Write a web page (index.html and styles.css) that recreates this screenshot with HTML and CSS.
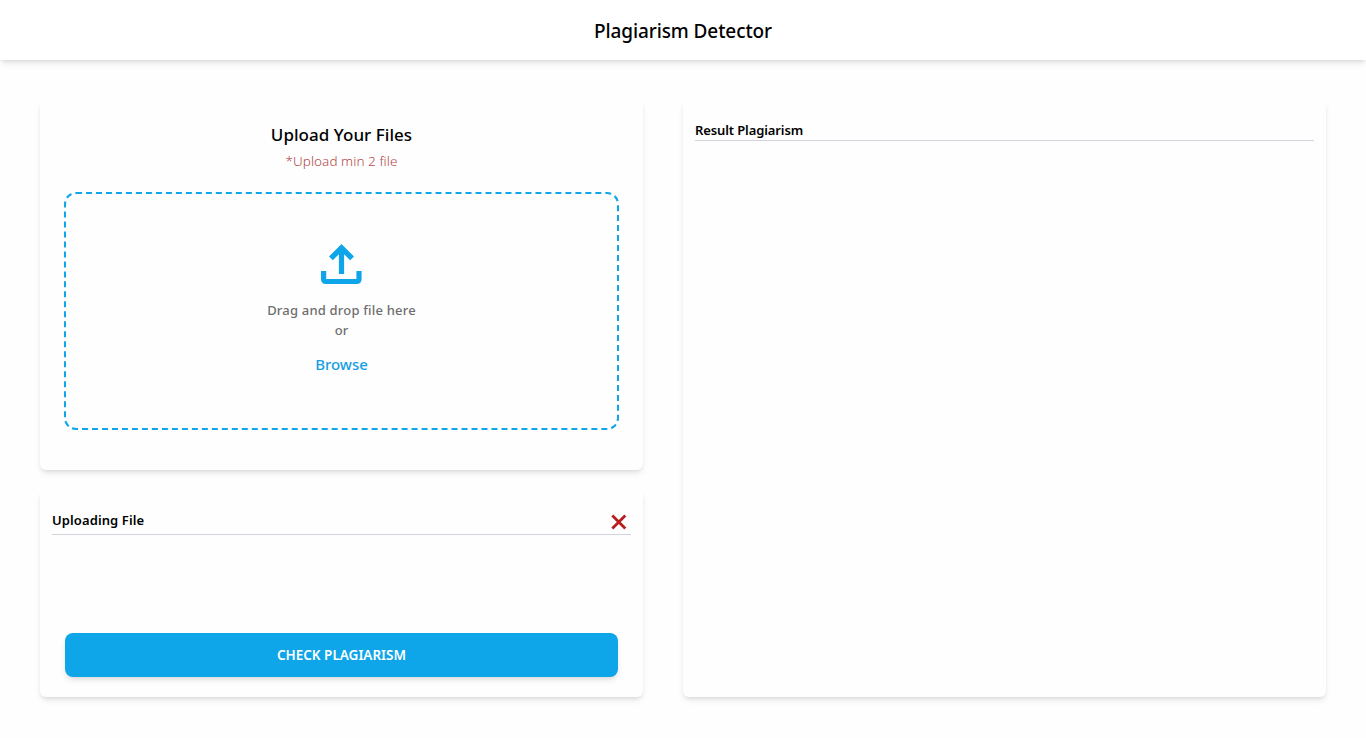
FILE: index.html
```html
<!DOCTYPE html>
<html lang="en">
<head>
<meta charset="utf-8">
<title>Plagiarism Detector</title>
<link rel="stylesheet" href="styles.css">
</head>
<body>
<header class="header"><h1 class="header-title"><span>Plagiarism Detector</span></h1></header>
<main class="layout">
  <div class="left">
    <section class="card upload">
      <h2 class="upload-title"><span>Upload Your Files</span></h2>
      <p class="upload-note"><span>*Upload min 2 file</span></p>
      <div class="dropzone">
        <svg class="upload-icon" viewBox="0 0 41 40" width="41" height="40" fill="#0ea5e9">
          <path d="M20.5 0 33 12.5 29.2 16.3 23.1 10.2V30H17.9V10.2L11.8 16.3 8 12.5Z"/>
          <path d="M0 27H5.2V34.9H35.4V27H40.6V35Q40.6 40 35.6 40H5Q0 40 0 35Z"/>
        </svg>
        <p class="drop-text"><span class="drag">Drag and drop file here</span><br><span>or</span></p>
        <a class="browse">Browse</a>
      </div>
    </section>
    <section class="card files">
      <div class="files-head">
        <h3 class="card-title uploading">Uploading File</h3>
        <svg class="close" viewBox="0 0 16 16" width="16" height="16"><path d="M1.3 1.6 14.3 14.4M14.3 1.6 1.3 14.4" fill="none" stroke="#b91c1c" stroke-width="2.8"/></svg>
      </div>
      <button class="check"><span>CHECK PLAGIARISM</span></button>
    </section>
  </div>
  <section class="card result">
    <div class="result-head"><h3 class="card-title result-title">Result Plagiarism</h3></div>
  </section>
</main>
</body>
</html>
```
FILE: styles.css
```css
* { box-sizing: border-box; margin: 0; padding: 0; }
body {
  height: 738px;
  overflow: hidden;
  background: #fefefe;
  color: #000;
  font-family: "Noto Sans", "Open Sans", sans-serif;
}
.header, .card, .check {
  box-shadow: 0 4px 6px -1px rgba(0, 0, 0, .1), 0 2px 4px -2px rgba(0, 0, 0, .1);
}
.header { height: 60px; background: #fff; text-align: center; }
.header-title { font-size: 19px; font-weight: 500; letter-spacing: -.1px; line-height: 62px; }
.layout { display: flex; gap: 40px; height: 637px; padding: 40px 40px 0; }
.left { display: flex; flex-direction: column; gap: 20px; width: 603px; }
.card { border-radius: 6px; background: #fefefe; }
.upload { height: 370px; padding: 20px 24px 0; text-align: center; }
.upload-title { height: 28px; font-size: 17px; font-weight: 500; letter-spacing: .04px; line-height: 30px; }
.upload-note { height: 20px; margin: 3px 0 21px; color: #b04848; font-size: 13.5px; font-weight: 300; letter-spacing: .05px; line-height: 20px; }
.dropzone {
  display: flex;
  flex-direction: column;
  align-items: center;
  height: 238px;
  padding-top: 50px;
  border: 2px dashed #0ea5e9;
  border-radius: 12px;
}
.upload-icon { display: block; flex: none; }
.drop-text { margin-top: 16px; color: #6e6e6e; font-size: 13px; font-weight: 500; line-height: 20px; }
.drag { letter-spacing: .2px; }
.browse { margin-top: 12px; color: #159fe2; font-size: 15px; font-weight: 500; line-height: 24px; }
.files { height: 207px; padding: 20px 12px 0; }
.files-head {
  display: flex;
  justify-content: space-between;
  height: 25px;
  padding-right: 4px;
  border-bottom: 1px solid #d1d5db;
}
.card-title { font-size: 13px; font-weight: 600; line-height: 20px; }
.uploading { letter-spacing: .1px; }
.result-title { letter-spacing: -.11px; }
.close { margin-top: 4px; }
.check {
  display: block;
  width: 553px;
  height: 44px;
  margin: 98px 0 0 13px;
  border: 0;
  border-radius: 8px;
  background: #0ea5e9;
  color: #fff;
  font-family: inherit;
  font-size: 13.5px;
  font-weight: 600;
  line-height: 42px;
}
.result { width: 643px; height: 597px; padding: 20px 12px 0; }
.result-head { height: 21px; border-bottom: 1px solid #d1d5db; }
```
